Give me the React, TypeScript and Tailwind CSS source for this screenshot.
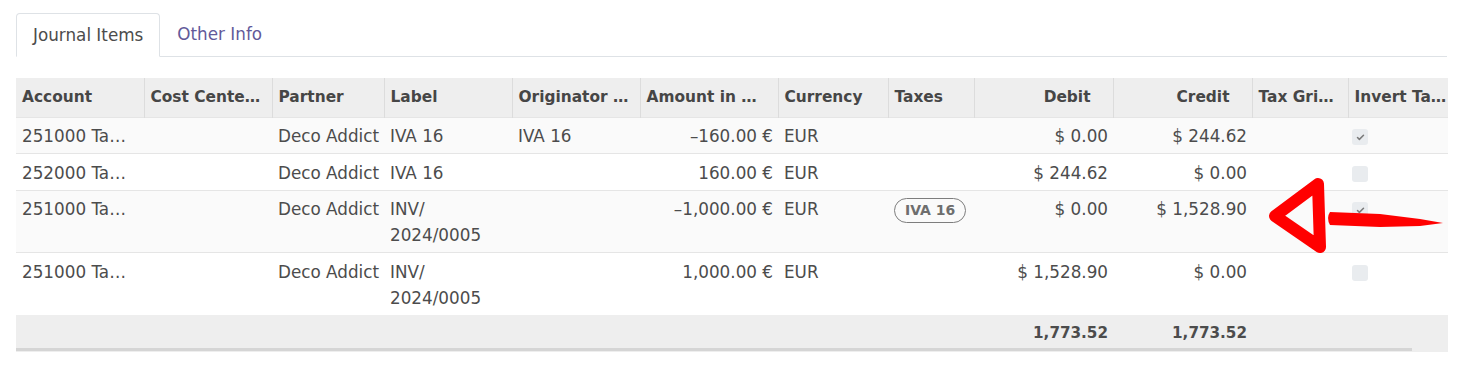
import { Check } from 'lucide-react';

type Row = {
  account: string;
  partner: string;
  label: string[];
  originator: string;
  amount: string;
  currency: string;
  tax?: string;
  debit: string;
  credit: string;
  invert: boolean;
  striped: boolean;
};

const rows: Row[] = [
  { account: '251000 Ta…', partner: 'Deco Addict', label: ['IVA 16'], originator: 'IVA 16', amount: '–160.00 €', currency: 'EUR', debit: '$ 0.00', credit: '$ 244.62', invert: true, striped: true },
  { account: '252000 Ta…', partner: 'Deco Addict', label: ['IVA 16'], originator: '', amount: '160.00 €', currency: 'EUR', debit: '$ 244.62', credit: '$ 0.00', invert: false, striped: false },
  { account: '251000 Ta…', partner: 'Deco Addict', label: ['INV/', '2024/0005'], originator: '', amount: '–1,000.00 €', currency: 'EUR', tax: 'IVA 16', debit: '$ 0.00', credit: '$ 1,528.90', invert: true, striped: true },
  { account: '251000 Ta…', partner: 'Deco Addict', label: ['INV/', '2024/0005'], originator: '', amount: '1,000.00 €', currency: 'EUR', debit: '$ 1,528.90', credit: '$ 0.00', invert: false, striped: false },
];

const widths = [128, 128, 112, 128, 128, 138, 110, 86, 139, 139, 96, 100];

const headers = [
  { name: 'Account', right: false },
  { name: 'Cost Cente…', right: false },
  { name: 'Partner', right: false },
  { name: 'Label', right: false },
  { name: 'Originator …', right: false },
  { name: 'Amount in …', right: false },
  { name: 'Currency', right: false },
  { name: 'Taxes', right: false },
  { name: 'Debit', right: true },
  { name: 'Credit', right: true },
  { name: 'Tax Gri…', right: false },
  { name: 'Invert Ta…', right: false },
];

const CheckBox = ({ checked }: { checked: boolean }) => (
  <span className="inline-flex items-center justify-center w-4 h-4 rounded-[3px] bg-[#e9ecef] align-middle -ml-[2px]">
    {checked && <Check className="w-[9px] h-[9px] text-[#7a7a7a]" strokeWidth={4} />}
  </span>
);

const cell = 'pl-[6px] pr-[5px] pt-[5.5px] pb-[4px] leading-[26px] align-top';

const App = () => {
  return (
    <div className="relative w-[1478px] h-[391px] bg-white text-[#4c4c4c] overflow-hidden" style={{ fontFamily: '"DejaVu Sans", sans-serif' }}>
      {/* tabs */}
      <div className="pt-[13px] pl-4 pr-[31px]">
        <div className="flex border-b border-[#dee2e6] text-[16.8px]">
          <div className="h-[44px] pt-px px-4 flex items-center border border-[#dee2e6] border-b-white -mb-px rounded-t-[4px] bg-white">
            Journal Items
          </div>
          <div className="h-[43px] pt-px px-[17px] flex items-center text-[#62599a]">Other Info</div>
        </div>
      </div>

      {/* journal items table */}
      <div className="mt-[21px] ml-4 w-[1432px]">
        <table className="table-fixed w-[1432px] border-collapse text-[16.8px]">
          <colgroup>
            {widths.map((w, i) => (
              <col key={i} style={{ width: w }} />
            ))}
          </colgroup>
          <thead>
            <tr className="bg-[#eeeeee] h-[39px]">
              {headers.map((h, i) => (
                <th
                  key={h.name}
                  className={`font-bold text-[15.4px] text-[#464646] whitespace-nowrap overflow-hidden pl-[6px] ${i > 0 ? 'border-l border-[#dcdcdc]' : ''} ${h.right ? 'text-right pr-[22px]' : 'text-left pr-[4px]'}`}
                >
                  {h.name}
                </th>
              ))}
            </tr>
          </thead>
          <tbody>
            {rows.map((r, i) => (
              <tr key={i} className={`border-t border-[#e5e5e5] ${r.striped ? 'bg-[#fafafa]' : 'bg-white'}`}>
                <td className={`${cell} whitespace-nowrap overflow-hidden`}>{r.account}</td>
                <td className={cell}></td>
                <td className={`${cell} whitespace-nowrap overflow-hidden`}>{r.partner}</td>
                <td className={cell}>
                  {r.label.map((l) => (
                    <div key={l}>{l}</div>
                  ))}
                </td>
                <td className={cell}>{r.originator}</td>
                <td className={`${cell} text-right whitespace-nowrap`}>{r.amount}</td>
                <td className={cell}>{r.currency}</td>
                <td className={`${cell} pl-[4px]`}>
                  {r.tax && (
                    <span className="inline-flex items-center h-[25px] px-[10px] rounded-full border border-[#7d7d7d] text-[14px] font-bold text-[#6e6e6e] align-middle">
                      {r.tax}
                    </span>
                  )}
                </td>
                <td className={`${cell} text-right whitespace-nowrap`}>{r.debit}</td>
                <td className={`${cell} text-right whitespace-nowrap`}>{r.credit}</td>
                <td className={cell}></td>
                <td className={cell}>
                  <CheckBox checked={r.invert} />
                </td>
              </tr>
            ))}
          </tbody>
          <tfoot>
            <tr className="bg-[#eeeeee] h-[33px] font-bold text-[15.2px]">
              <td colSpan={8}></td>
              <td className="text-right pr-[5px] pt-[5px] pb-0 align-middle">1,773.52</td>
              <td className="text-right pr-[5px] pt-[5px] pb-0 align-middle">1,773.52</td>
              <td colSpan={2}></td>
            </tr>
          </tfoot>
        </table>
        <div className="h-[4px] bg-[#eeeeee]">
          <div className="h-[3px] w-[1396px] bg-[#d5d5d5]" />
        </div>
      </div>

      {/* red hand-drawn arrow annotation */}
      <svg className="absolute left-0 top-0 pointer-events-none" width="1478" height="391" viewBox="0 0 1478 391">
        <path d="M1318 184 L1275 216 L1320 247 Z" fill="none" stroke="#ff0000" strokeWidth="12" strokeLinejoin="round" />
        <path d="M1330 212 L1380 214 L1420 219 L1443 223 L1420 226 L1380 227 L1330 225 Q1326 218 1330 212 Z" fill="#ff0000" />
      </svg>
    </div>
  );
};

export default App;
